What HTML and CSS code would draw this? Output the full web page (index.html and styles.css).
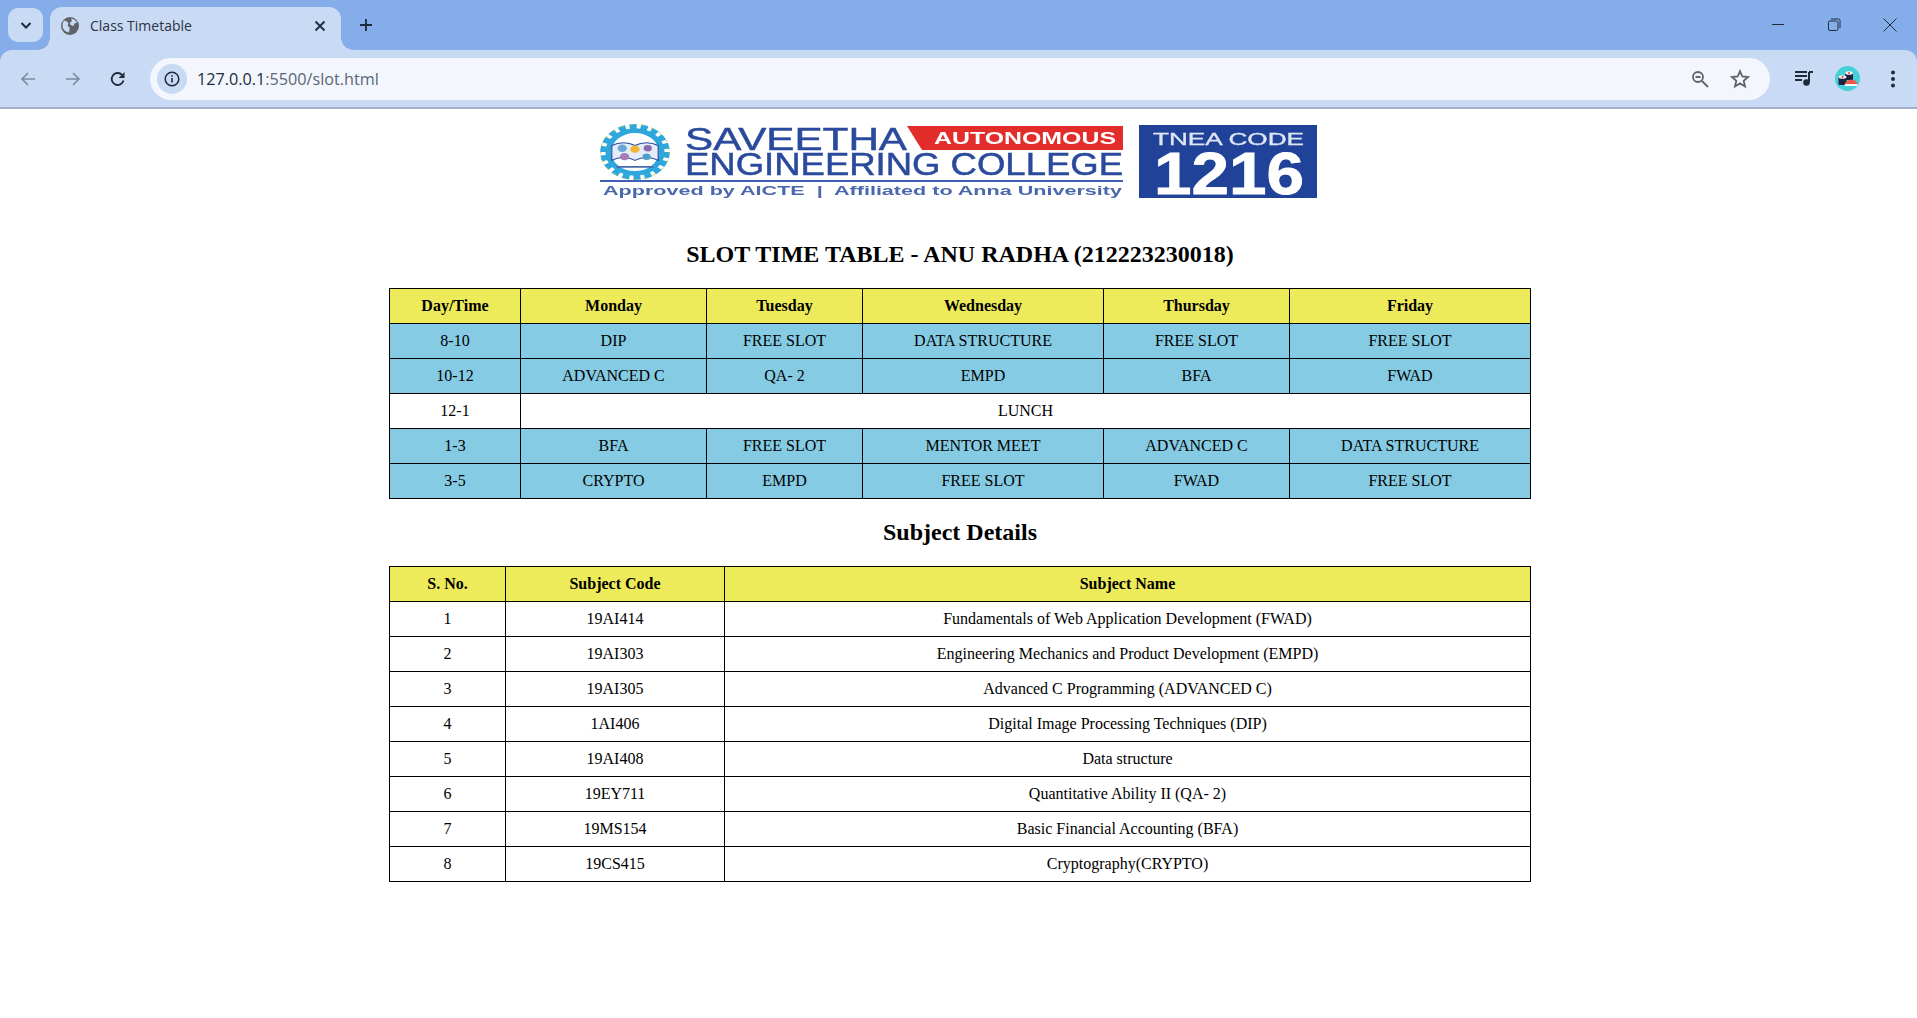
FILE: index.html
```html
<!DOCTYPE html>
<html lang="en">
<head>
<meta charset="utf-8">
<title>Class Timetable</title>
<link rel="stylesheet" href="styles.css">
</head>
<body>
<header class="chrome">
  <div class="tabstrip">
    <div class="tabsearch">
      <svg width="14" height="14" viewBox="0 0 14 14"><path d="M2.500 5l4.500 4.500L11.500 5" fill="none" stroke="#1f2a3a" stroke-width="2"/></svg>
    </div>
    <div class="tab">
      <svg class="globe" width="18" height="18" viewBox="0 0 18 18"><circle cx="9" cy="9" r="9" fill="#5f6368"/><path d="M3 3.500l3 1 1.500 2-1 2 2 2v3l-1 2C4 14.500 1.500 12 1.500 9c0-2 .5-4 1.500-5.500zM10 1.500c3 .5 5 2 6 4l-2.500 1-1 2.500-3-1-.5-2.500 2-1.500z" fill="#c9daf5"/></svg>
      <span class="tabtitle">Class Timetable</span>
      <svg class="tabclose" width="12" height="12" viewBox="0 0 12 12"><path d="M1.500 1.500l9 9M10.500 1.500l-9 9" stroke="#1f2a3a" stroke-width="1.800"/></svg>
    </div>
    <svg class="newtab" width="14" height="14" viewBox="0 0 14 14"><path d="M7 1v12M1 7h12" stroke="#1f2a3a" stroke-width="1.800"/></svg>
    <div class="winctl">
      <svg width="14" height="14" viewBox="0 0 14 14"><path d="M1 6.500h12" stroke="#1f2a3a" stroke-width="1"/></svg>
      <svg width="14" height="14" viewBox="0 0 14 14"><rect x="1.500" y="3" width="9.500" height="9.500" rx="1.500" fill="none" stroke="#1f2a3a"/><path d="M4 1h7.500A1.500 1.500 0 0 1 13 2.500V10" fill="none" stroke="#1f2a3a"/></svg>
      <svg width="14" height="14" viewBox="0 0 14 14"><path d="M.5.500l13 13M13.500.500l-13 13" stroke="#1f2a3a" stroke-width="1"/></svg>
    </div>
  </div>
  <div class="toolbar">
    <svg class="navicon" width="16" height="16" viewBox="0 0 16 16"><path d="M15 8H2M8 2L2 8l6 6" fill="none" stroke="#7d8ba0" stroke-width="1.600"/></svg>
    <svg class="navicon" width="16" height="16" viewBox="0 0 16 16"><path d="M1 8h13M8 2l6 6-6 6" fill="none" stroke="#7d8ba0" stroke-width="1.600"/></svg>
    <svg class="navicon" width="16" height="16" viewBox="0 0 16 16"><path d="M13.500 9.500A6 6 0 1 1 12 3.800" fill="none" stroke="#1f2a3a" stroke-width="1.800"/><path d="M14.500 1v6h-6z" fill="#1f2a3a"/></svg>
    <div class="omnibox">
      <div class="siteinfo">
        <svg width="16" height="16" viewBox="0 0 16 16"><circle cx="8" cy="8" r="6.800" fill="none" stroke="#1f2a3a" stroke-width="1.500"/><path d="M8 7v4.500M8 4.300v1.500" stroke="#1f2a3a" stroke-width="1.600"/></svg>
      </div>
      <span class="url"><span class="host">127.0.0.1</span>:5500/slot.html</span>
      <svg class="zoomicon" width="18" height="18" viewBox="0 0 18 18"><circle cx="7" cy="7" r="5" fill="none" stroke="#5f6368" stroke-width="1.800"/><path d="M4.500 7h5M11 11l6 6" stroke="#5f6368" stroke-width="1.800"/></svg>
      <svg class="star" width="20" height="20" viewBox="0 0 20 20"><path d="M10 2.200l2.300 5.300 5.700.5-4.300 3.800 1.300 5.600-5-3-5 3 1.300-5.600L2 8l5.700-.5z" fill="none" stroke="#5f6368" stroke-width="1.800"/></svg>
    </div>
    <svg class="media" width="20" height="18" viewBox="0 0 20 18"><path d="M1 3h12M1 7h12M1 11h7" stroke="#1f2a3a" stroke-width="2"/><path d="M15 3v10" stroke="#1f2a3a" stroke-width="2"/><path d="M15 3h4" stroke="#1f2a3a" stroke-width="2"/><circle cx="12.500" cy="13.500" r="3.300" fill="#1f2a3a"/></svg>
    <svg class="avatar" width="25" height="25" viewBox="0 0 25 25"><circle cx="12.500" cy="12.500" r="12.500" fill="#45cfd8"/><rect x="10" y="6" width="8" height="8" rx="1" fill="#1c2340"/><ellipse cx="14" cy="7" rx="4" ry="1.800" fill="#f3f3f3"/><circle cx="14" cy="7" r="1" fill="#e0433c"/><rect x="3.500" y="10" width="8" height="9" rx="1" fill="#1c2340"/><ellipse cx="7.500" cy="11" rx="4" ry="1.800" fill="#f3f3f3"/><circle cx="7.500" cy="11" r="1" fill="#e0433c"/><path d="M10 18c1-5 11-6 12.500 0z" fill="#ef5a4c"/><rect x="9.500" y="18" width="13" height="2" rx="1" fill="#f6f6f6"/></svg>
    <svg class="menu" width="6" height="18" viewBox="0 0 6 18"><circle cx="3" cy="2.500" r="2" fill="#1f2a3a"/><circle cx="3" cy="9" r="2" fill="#1f2a3a"/><circle cx="3" cy="15.500" r="2" fill="#1f2a3a"/></svg>
  </div>
</header>
<main class="page">
  <svg class="logo" width="740" height="100" viewBox="0 0 740 100">
    <g class="soft">
      <g transform="translate(45 43) scale(1.16 .93)">
        <circle r="27" fill="none" stroke="#2ea7dc" stroke-width="6" stroke-dasharray="6 3.420"/>
        <circle r="23" fill="#fff" stroke="#2ea7dc" stroke-width="5"/>
        <circle r="29.500" fill="none" stroke="#a8c84a" stroke-width=".8" stroke-dasharray="3 6"/>
        <path d="M-20 9c6-4 14-4 20 0 6-4 14-4 20 0V-7C14-11 6-11 0-7c-6-4-14-4-20 0z" fill="#e3edf7" stroke="#2a4a9c"/>
        <path d="M-16 16h32" stroke="#4a68ad" stroke-width="2"/>
        <circle cy="-3" r="4" fill="#f2b632"/>
        <circle cx="-11" cy="-4" r="4" fill="#6aa5d8"/>
        <circle cx="11" cy="-4" r="3.500" fill="#8a6bb0"/>
        <circle cx="-9" cy="5" r="4" fill="#a77db5"/>
        <circle cx="10" cy="5" r="3.500" fill="#4fa0c8"/>
      </g>
      <text class="lg-big" x="95" y="41" textLength="222" lengthAdjust="spacingAndGlyphs">SAVEETHA</text>
      <path d="M317 17h216v24H332z" fill="#e32d2b"/>
      <text class="lg-auto" x="344" y="35" textLength="182" lengthAdjust="spacingAndGlyphs">AUTONOMOUS</text>
      <text class="lg-big" x="95" y="66" textLength="438" lengthAdjust="spacingAndGlyphs">ENGINEERING COLLEGE</text>
      <rect x="10" y="71" width="523" height="2" fill="#3f5fb5"/>
      <text class="lg-sub" x="13" y="86" textLength="519" lengthAdjust="spacingAndGlyphs">Approved by AICTE  |  Affiliated to Anna University</text>
      <rect x="549" y="16" width="178" height="73" fill="#214299"/>
      <text class="lg-tnea" x="563" y="36" textLength="151" lengthAdjust="spacingAndGlyphs">TNEA CODE</text>
      <text class="lg-code" x="564" y="85" textLength="150" lengthAdjust="spacingAndGlyphs">1216</text>
    </g>
  </svg>
  <h1 class="title">SLOT TIME TABLE - ANU RADHA (212223230018)</h1>
  <table class="grid slots">
    <thead>
      <tr><th class="c1">Day/Time</th><th class="c2">Monday</th><th class="c3">Tuesday</th><th class="c4">Wednesday</th><th class="c5">Thursday</th><th>Friday</th></tr>
    </thead>
    <tbody>
      <tr class="blue"><td>8-10</td><td>DIP</td><td>FREE SLOT</td><td>DATA STRUCTURE</td><td>FREE SLOT</td><td>FREE SLOT</td></tr>
      <tr class="blue"><td>10-12</td><td>ADVANCED C</td><td>QA- 2</td><td>EMPD</td><td>BFA</td><td>FWAD</td></tr>
      <tr><td>12-1</td><td colspan="5">LUNCH</td></tr>
      <tr class="blue"><td>1-3</td><td>BFA</td><td>FREE SLOT</td><td>MENTOR MEET</td><td>ADVANCED C</td><td>DATA STRUCTURE</td></tr>
      <tr class="blue"><td>3-5</td><td>CRYPTO</td><td>EMPD</td><td>FREE SLOT</td><td>FWAD</td><td>FREE SLOT</td></tr>
    </tbody>
  </table>
  <h2 class="subtitle">Subject Details</h2>
  <table class="grid subjects">
    <thead>
      <tr><th class="s1">S. No.</th><th class="s2">Subject Code</th><th>Subject Name</th></tr>
    </thead>
    <tbody>
      <tr><td>1</td><td>19AI414</td><td>Fundamentals of Web Application Development (FWAD)</td></tr>
      <tr><td>2</td><td>19AI303</td><td>Engineering Mechanics and Product Development (EMPD)</td></tr>
      <tr><td>3</td><td>19AI305</td><td>Advanced C Programming (ADVANCED C)</td></tr>
      <tr><td>4</td><td>1AI406</td><td>Digital Image Processing Techniques (DIP)</td></tr>
      <tr><td>5</td><td>19AI408</td><td>Data structure</td></tr>
      <tr><td>6</td><td>19EY711</td><td>Quantitative Ability II (QA- 2)</td></tr>
      <tr><td>7</td><td>19MS154</td><td>Basic Financial Accounting (BFA)</td></tr>
      <tr><td>8</td><td>19CS415</td><td>Cryptography(CRYPTO)</td></tr>
    </tbody>
  </table>
</main>
</body>
</html>
```
FILE: styles.css
```css
* { box-sizing: border-box; }
html, body { margin: 0; padding: 0; background: #fff; }
body { width: 1917px; height: 1018px; overflow: hidden; font-family: "Liberation Serif", serif; color: #000; }

.chrome { height: 109px; background: #85adea; display: flex; flex-direction: column; }
.tabstrip { height: 50px; display: flex; align-items: flex-end; padding-left: 8px; }
.tabsearch { width: 35px; height: 34px; margin-bottom: 8px; background: #c9daf5; border-radius: 10px; display: flex; align-items: center; justify-content: center; }
.tab { width: 291px; height: 43px; margin-left: 7px; background: #c9daf5; border-radius: 12px 12px 0 0; display: flex; align-items: center; padding: 0 12px 6px 11px; position: relative; }
.tab::before, .tab::after { content: ""; position: absolute; bottom: 0; width: 12px; height: 12px; }
.tab::before { left: -12px; background: radial-gradient(circle at 0 0, transparent 11.500px, #c9daf5 12px); }
.tab::after { right: -12px; background: radial-gradient(circle at 100% 0, transparent 11.500px, #c9daf5 12px); }
.globe { flex: none; }
.tabtitle { font: 14px "Open Sans", "Liberation Sans", sans-serif; color: #2c3440; margin-left: 11px; flex: 1; }
.tabclose { flex: none; margin-right: 3px; }
.newtab { margin: 0 0 18px 18px; }
.winctl { margin-left: auto; display: flex; gap: 42px; padding-right: 20px; align-self: flex-start; margin-top: 18px; }

.toolbar { height: 59px; background: #c9daf5; border-radius: 12px 12px 0 0; border-bottom: 2px solid #a1afc9; display: flex; align-items: center; padding: 0 21px 0 20px; }
.navicon { flex: none; margin-right: 29px; }
.navicon:nth-of-type(3) { margin-right: 24px; }
.omnibox { flex: 1; height: 42px; background: #f3f7fd; border-radius: 21px; display: flex; align-items: center; padding: 0 20px 0 7px; }
.siteinfo { width: 30px; height: 30px; background: #c9daf5; border-radius: 50%; display: flex; align-items: center; justify-content: center; flex: none; }
.url { font: 16.200px "Open Sans", "Liberation Sans", sans-serif; color: #5b6675; margin-left: 10px; flex: 1; }
.host { color: #1f2a3a; }
.zoomicon { flex: none; margin-right: 21px; margin-top: 1px; }
.star { flex: none; }
.media { flex: none; margin: -1px 0 0 24px; }
.avatar { flex: none; margin: 0 0 0 21px; }
.menu { flex: none; margin: 0 0 0 30px; }

.page { display: flex; flex-direction: column; align-items: center; padding-left: 3px; }
.logo { display: block; flex: none; height: 100px; }
.soft { filter: blur(0.7px); }
.lg-big { font: 400 32px "Liberation Sans", sans-serif; fill: #2a4a9c; stroke: #2a4a9c; stroke-width: .5px; }
.lg-auto { font: 700 17px "Liberation Sans", sans-serif; fill: #fff; }
.lg-sub { font: 700 13px "Liberation Sans", sans-serif; fill: #4a68ad; white-space: pre; }
.lg-tnea { font: 400 17px "Liberation Sans", sans-serif; fill: #dfe6f4; stroke: #dfe6f4; stroke-width: .3px; }
.lg-code { font: 700 60px "Liberation Sans", sans-serif; fill: #fff; stroke: #fff; stroke-width: .8px; }

.title { font-size: 24px; font-weight: 700; line-height: 27px; margin: 32px 0 0; }
.subtitle { font-size: 24px; font-weight: 700; line-height: 27px; margin: 20px 0 0; }

.grid { width: 1142px; table-layout: fixed; border-collapse: collapse; font-size: 16px; }
.slots { margin-top: 20px; }
.subjects { margin-top: 20px; }
.grid th, .grid td { border: 1px solid #000; height: 35px; padding: 0 4px; text-align: center; font-size: 16px; line-height: 18px; }
.grid th { background: #eeeb5a; font-weight: 700; }
.blue td { background: #85cbe3; }
.c1 { width: 131px; }
.c2 { width: 186px; }
.c3 { width: 156px; }
.c4 { width: 241px; }
.c5 { width: 186px; }
.s1 { width: 116px; }
.s2 { width: 219px; }
```
